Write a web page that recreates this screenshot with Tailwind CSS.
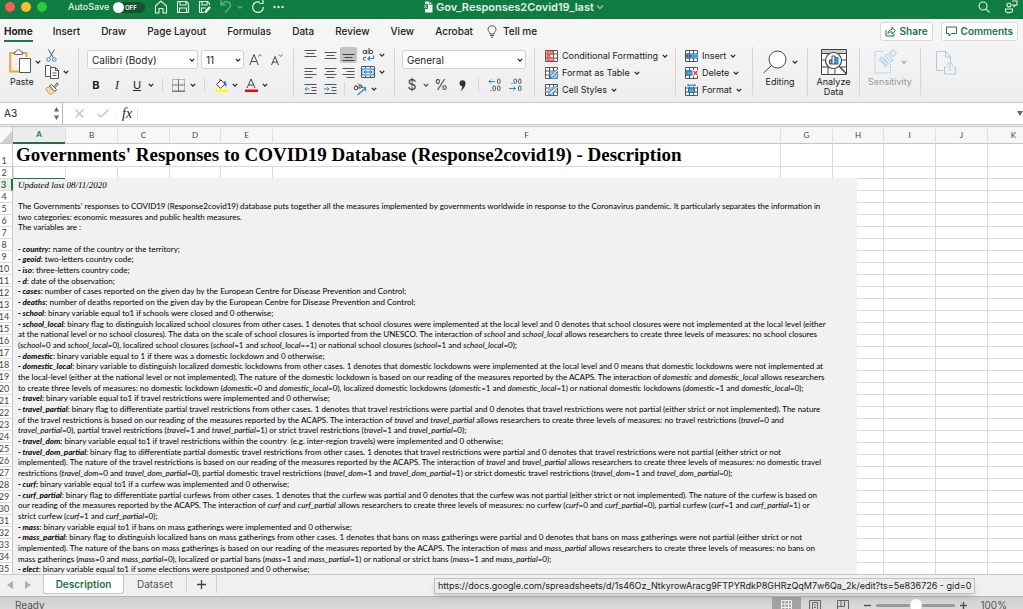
<!DOCTYPE html>
<html lang="en">
<head>
    <meta charset="UTF-8">
    <meta name="viewport" content="width=device-width, initial-scale=1.0">
    <title>Gov_Responses2Covid19_last</title>
    <script src="https://cdn.jsdelivr.net/npm/@tailwindcss/browser@4"></script>
</head>
<body class="h-screen overflow-hidden flex flex-col bg-[#f2f2f2] font-['Inter','Liberation_Sans',sans-serif] text-[#222]">
    <svg class="hidden">
        <symbol id="chev" viewBox="0 0 6 6"><path d="M.8 1.8 3 4.2 5.2 1.8" fill="none" stroke="currentColor" stroke-width="1.2"/></symbol>
        <symbol id="cells" viewBox="0 0 13 12"><path d="M.5.5h12v11H.5zM.5 4h12M.5 8h12M4.5.5v11M8.5.5v11" fill="#fff" stroke="#555"/></symbol>
    </svg>

    <!-- title bar -->
    <header class="h-[19px] shrink-0 bg-[#107c41] text-white grid grid-cols-[423px_1fr_auto] pb-[6px] items-center">
        <div class="flex items-center pl-[5px]">
            <div class="flex gap-[6px]">
                <span class="size-[10px] rounded-full bg-[#fc5b57]"></span>
                <span class="size-[10px] rounded-full bg-[#fdbc2e]"></span>
                <span class="size-[10px] rounded-full bg-[#28c840]"></span>
            </div>
            <label for="autosave" class="ml-[21px] w-[45px] text-[9px] leading-3 font-medium text-[#e3f1e9]">AutoSave</label>
            <button id="autosave" class="flex items-center w-8 h-[11px] rounded-full bg-[#155231] text-[6px] font-semibold"><span class="size-[11px] rounded-full bg-white mr-[1px]"></span>OFF</button>
            <div class="flex items-center gap-2 ml-[9px]">
                <button aria-label="Home"><svg width="14" height="14" viewBox="0 0 14 14" fill="none" stroke="#e3f1e9" stroke-width="1.1"><path d="M1.5 6 7 1l5.500 5v7H9V8.500H5V13H1.500z"/></svg></button>
                <button aria-label="Save"><svg width="14" height="14" viewBox="0 0 14 14" fill="none" stroke="#e3f1e9" stroke-width="1.100"><path d="M1.500 1.500h9l2 2v9h-11zM4 1.500V5h6V1.500M3.500 12.500V8h7v4.500"/></svg></button>
                <button aria-label="Save as"><svg width="14" height="14" viewBox="0 0 14 14" fill="none" stroke="#e3f1e9" stroke-width="1.100"><path d="M6 12.500H1.500v-11h8l2 2V5M4 1.500V5h5V1.500M3.500 12.500V8H8"/><path d="m7 12.500 5-5.500" stroke="#fff" stroke-width="2.500"/></svg></button>
                <button aria-label="Undo" class="flex items-center gap-[5px] text-[#6db48c]"><svg width="12" height="14" viewBox="0 0 12 14" fill="none" stroke="currentColor" stroke-width="1.200"><path d="M1 0v5h5M1.500 4.500C5 0 11 1.500 10.500 5.500 10 8 7.500 10 5 12.500"/></svg><svg width="6" height="6"><use href="#chev"/></svg></button>
                <button aria-label="Redo"><svg width="14" height="14" viewBox="0 0 14 14" fill="none" stroke="#e3f1e9" stroke-width="1.200"><path d="M9 2.200A5.300 5.300 0 1 0 12.300 7M12 0v3.500H8.500"/></svg></button>
                <button aria-label="More"><svg width="12" height="4" viewBox="0 0 12 4" fill="#e3f1e9"><circle cx="1.500" cy="2" r="1.200"/><circle cx="5.500" cy="2" r="1.200"/><circle cx="9.500" cy="2" r="1.200"/></svg></button>
            </div>
        </div>
        <div class="flex items-center">
            <svg width="10" height="12" viewBox="0 0 10 12"><path d="M2 .5h4.500L9.500 3.500v8H2z" fill="#f4faf6"/><path d="M6.500.5v3h3" stroke="#107c41" fill="none" stroke-width=".7"/><path d="M0 3h5v5H0z" fill="#107c41"/><path d="m1 3.800 3 3.400m0-3.400L1 7.200M6 6h2.500M6 8h2.500" stroke="#c9e4d5"/></svg>
            <h1 class="ml-[3px] text-[11px] leading-3 font-semibold text-[#e3f1e9]">Gov_Responses2Covid19_last</h1>
            <svg width="8" height="8" class="ml-[2px] text-[#7dbd99]"><use href="#chev"/></svg>
        </div>
        <div class="flex items-center gap-[14px] pr-[5px]">
            <button aria-label="Search"><svg width="12" height="12" viewBox="0 0 12 12" fill="none" stroke="#e3f1e9" stroke-width="1.100"><circle cx="5" cy="5" r="4"/><path d="m8 8 3.500 3.500"/></svg></button>
            <button aria-label="Presence"><svg width="14" height="14" viewBox="0 0 14 14" fill="none" stroke="#e3f1e9" stroke-width="1.100"><circle cx="5" cy="5" r="2"/><path d="M1.500 9h7v1.500c0 3-7 3-7 0zM8 1h5v4h-1.500L10 6.500V5H8"/></svg></button>
        </div>
    </header>

    <!-- ribbon tabs -->
    <nav class="h-6 shrink-0 flex items-center pl-1 pr-[5px] text-[10px] font-medium bg-[#f5f5f5]">
        <a href="#" class="h-6 pt-[3px] leading-[18px] font-bold"><span class="block border-b-2 border-[#107c41]">Home</span></a>
        <div class="flex gap-[21px] ml-5">
            <a href="#">Insert</a>
            <a href="#">Draw</a>
            <a href="#">Page Layout</a>
            <a href="#">Formulas</a>
            <a href="#">Data</a>
            <a href="#">Review</a>
            <a href="#">View</a>
            <a href="#">Acrobat</a>
        </div>
        <a href="#" class="flex items-center gap-[6px] ml-[14px]"><svg width="10" height="13" viewBox="0 0 10 13" fill="none" stroke="#555"><path d="M3 9C3 7 1 6.500 1 4.500 1 -.500 9 -.500 9 4.500 9 6.500 7 7 7 9zM3 10.500h4M4 12.300h2"/></svg>Tell me</a>
        <div class="ml-auto flex gap-2 font-semibold text-[#217346]">
            <button class="flex items-center gap-1 h-[19px] px-1 bg-white border border-[#d9d9d9] rounded-[3px]"><svg width="11" height="11" viewBox="0 0 11 11" fill="none" stroke="#217346"><path d="M1 4v6h8V7.500M3 7.500C3 4.500 5 3.500 7 3.500V1.200l3.300 3.500L7 8V5.800C5 5.800 4 6 3 7.500z"/></svg>Share</button>
            <button class="flex items-center gap-1 h-[19px] px-1 bg-white border border-[#d9d9d9] rounded-[3px]"><svg width="11" height="11" viewBox="0 0 11 11" fill="none" stroke="#217346"><path d="M.5 1h10v6.500H5.500L3 10V7.500H.5z"/></svg>Comments</button>
        </div>
    </nav>

    <!-- ribbon -->
    <section class="h-[59px] shrink-0 flex pt-1 text-[9px] leading-[10px] bg-gradient-to-b from-[#f5f5f5] to-[#ededed] [&>div]:h-[50px] [&>div]:shrink-0 [&>div]:border-r [&>div]:border-[#d6d6d6]">
        <div class="w-[79px] flex gap-[5px] pl-[9px]">
            <button class="flex flex-col items-center w-[31px]">
                <span class="flex items-center gap-[3px] h-[29px]">
                    <svg width="23" height="25" viewBox="0 0 23 25" fill="none"><path d="M5 4H1.200v18.500H10M14 4h3.500v4" stroke="#efa53c" stroke-width="2"/><path d="M5.500 5.500V3H7c0-3 5-3 5 0h1.500v2.500z" fill="#fff" stroke="#666"/><path d="M10.500 9.500h11v14h-11z" fill="#fff" stroke="#555"/></svg>
                    <svg width="6" height="6"><use href="#chev"/></svg>
                </span>
                <span class="self-start ml-[1px] mt-[1px]">Paste</span>
            </button>
            <div class="flex flex-col gap-[3px] pt-[2px]">
                <button aria-label="Cut" class="ml-[1px]"><svg width="11" height="13" viewBox="0 0 11 13" fill="none"><path d="m2.500.5 4.700 8M8.500.5 3.800 8.500" stroke="#555"/><circle cx="2.500" cy="10.500" r="1.800" stroke="#2b88d8"/><circle cx="8.300" cy="10.500" r="1.800" stroke="#2b88d8"/></svg></button>
                <button aria-label="Copy" class="flex items-center gap-1"><svg width="14" height="14" viewBox="0 0 14 14" fill="#fff" stroke="#555"><path d="M5 11.500H.5V.5h4l2 1.500"/><path d="M5.500 2.500h5l3 3v8h-8zM10.500 2.500v3h3M7.500 8h4M7.500 10.500h4"/></svg><svg width="6" height="6"><use href="#chev"/></svg></button>
                <button aria-label="Format painter"><svg width="14" height="13" viewBox="0 0 14 13"><path d="M1 6.500 4 4.500l5 5-2.500 3C4 12 1.500 9.500 1 6.500z" fill="#fbd9a8" stroke="#e8912d"/><path d="m4.500 4 2-1.500 5 5L10 9.500zM9 4.500 12 1l1.200 1L10 5.500z" fill="#fff" stroke="#555"/></svg></button>
            </div>
        </div>

        <div class="w-[215px] pl-2 pt-[3px]">
            <div class="flex items-center">
                <span class="relative"><select aria-label="Font" class="appearance-none w-[111px] h-[19px] pl-1 text-[10px] bg-white border border-[#d2d2d2] rounded-[3px]"><option>Calibri (Body)</option></select><svg width="6" height="6" class="absolute right-[3px] top-[7px]"><use href="#chev"/></svg></span>
                <span class="relative ml-[3px]"><select aria-label="Font size" class="appearance-none w-[43px] h-[19px] pl-1 text-[10px] bg-white border border-[#d2d2d2] rounded-[3px]"><option>11</option></select><svg width="6" height="6" class="absolute right-[3px] top-[7px]"><use href="#chev"/></svg></span>
                <button aria-label="Grow font" class="ml-[5px]"><svg width="13" height="13" viewBox="0 0 13 13" fill="none" stroke="#444"><path d="M.7 12 5 1.500 9.300 12M2.200 8.500h5.600"/><path d="m9.500 3.500 1.700-2L13 3.500" stroke="#2b88d8"/></svg></button>
                <button aria-label="Shrink font" class="ml-2"><svg width="13" height="13" viewBox="0 0 13 13" fill="none" stroke="#444"><path d="M1.500 12 5 3.500 8.500 12M2.700 9h4.600"/><path d="m9 1.500 1.700 2 1.800-2" stroke="#2b88d8"/></svg></button>
            </div>
            <div class="flex items-center h-5 mt-[6px] pl-1 text-[11px]">
                <button class="w-[10px] font-bold">B</button>
                <button class="w-[10px] ml-[11px] italic font-['Liberation_Serif',serif] text-[12px]">I</button>
                <button class="w-[10px] ml-[10px] underline">U</button>
                <svg width="6" height="6" class="ml-[6px]"><use href="#chev"/></svg>
                <span class="w-px h-[14px] ml-2 bg-[#d6d6d6]"></span>
                <button aria-label="Borders" class="ml-[9px]"><svg width="13" height="13" viewBox="0 0 13 13" fill="none" stroke="#777"><path d="M.5.5h12v11H.5z" stroke-dasharray="1 1"/><path d="M0 6h13M6.500 0v12M0 12.500h13"/></svg></button>
                <svg width="6" height="6" class="ml-[5px]"><use href="#chev"/></svg>
                <span class="w-px h-[14px] ml-2 bg-[#d6d6d6]"></span>
                <button aria-label="Fill color" class="ml-[9px]"><svg width="14" height="14" viewBox="0 0 14 14"><path d="M2.500 6.500 7 2l4 4-4.500 4.300zM6 3V.8" fill="#fff" stroke="#444"/><path d="M10 3.500c2 .5 2 2.500 1.800 5" fill="none" stroke="#2b88d8" stroke-width="1.500"/><path d="M1 11.500h13V14H1z" fill="#ffff00"/></svg></button>
                <svg width="6" height="6" class="ml-[4px]"><use href="#chev"/></svg>
                <button aria-label="Font color" class="ml-[6px]"><svg width="14" height="14" viewBox="0 0 14 14" fill="none" stroke="#444"><path d="m3 10 4-9 4 9M4.500 7h5"/><path d="M1 11.500h13V14H1z" fill="#ff0000" stroke="none"/></svg></button>
                <svg width="6" height="6" class="ml-[4px]"><use href="#chev"/></svg>
            </div>
        </div>

        <div class="w-[101px] pl-[7px] flex flex-col">
            <div class="flex items-center h-4">
                <button aria-label="Align top" class="w-[19px] pl-[3px]"><svg width="13" height="13" viewBox="0 0 13 13" stroke="#555"><path d="M.5 1.500h12M2.500 4.500h8M.5 7.500h12"/></svg></button>
                <button aria-label="Align middle" class="w-[20px] pl-[4px]"><svg width="13" height="13" viewBox="0 0 13 13" stroke="#555"><path d="M.5 3.500h12M2.500 6.500h8M.5 9.500h12"/></svg></button>
                <button aria-label="Align bottom" class="w-[17px] h-4 pl-[2px] rounded-[2px] bg-[#c4c4c4]"><svg width="13" height="13" viewBox="0 0 13 13" stroke="#444"><path d="M.5 5.500h12M2.500 8.500h8M.5 11.500h12"/></svg></button>
                <button aria-label="Wrap text" class="ml-[5px] mr-[4px]"><svg width="13" height="14" viewBox="0 0 13 14" fill="none" stroke="#444"><circle cx="2.700" cy="4" r="1.700"/><path d="M4.800 2v4M7 0v6M4 9.500c-3-1.500-4 3-.5 3"/><circle cx="9" cy="4" r="1.700"/><path d="M11.500 7.500v3H6m2-2-2 2 2 2" stroke="#2b88d8" stroke-width="1.200"/></svg></button>
                <svg width="6" height="6"><use href="#chev"/></svg>
            </div>
            <div class="flex items-center h-[18px]">
                <button aria-label="Align left" class="w-[19px] pl-[3px]"><svg width="13" height="13" viewBox="0 0 13 13" stroke="#555"><path d="M.5 2.500h12M.5 5.500h8M.5 8.500h12M.5 11.500h8"/></svg></button>
                <button aria-label="Align center" class="w-[20px] pl-[4px]"><svg width="13" height="13" viewBox="0 0 13 13" stroke="#555"><path d="M.5 2.500h12M2.500 5.500h8M.5 8.500h12M2.500 11.500h8"/></svg></button>
                <button aria-label="Align right" class="w-[17px] pl-[2px]"><svg width="13" height="13" viewBox="0 0 13 13" stroke="#555"><path d="M.5 2.500h12M4.500 5.500h8M.5 8.500h12M4.500 11.500h8"/></svg></button>
                <button aria-label="Merge" class="ml-[4px] mr-[4px]"><svg width="14" height="12" viewBox="0 0 14 12" fill="none"><path d="M.5.5h13v11H.5zM4.500.5v2M9.500.5v2M4.500 9.500v2M9.500 9.500v2" stroke="#555"/><path d="M1 3h12v6H1z" fill="#cfe6f8" stroke="#2b88d8"/><path d="M3 6h8M4.500 4.500 3 6l1.500 1.500M9.500 4.500 11 6 9.500 7.500" stroke="#1a70c0"/></svg></button>
                <svg width="6" height="6"><use href="#chev"/></svg>
            </div>
            <div class="flex items-center h-4">
                <button aria-label="Decrease indent" class="w-[19px] pl-[3px]"><svg width="13" height="13" viewBox="0 0 13 13" stroke="#555" fill="none"><path d="M.5 1.500h12M7.500 4.500h5M7.500 7.500h5M.5 10.500h12"/><path d="M5.500 6H1m1.800-1.800L1 6l1.800 1.800" stroke="#2b88d8"/></svg></button>
                <button aria-label="Increase indent" class="w-[20px] pl-[4px]"><svg width="13" height="13" viewBox="0 0 13 13" stroke="#555" fill="none"><path d="M.5 1.500h12M7.500 4.500h5M7.500 7.500h5M.5 10.500h12"/><path d="M0 6h5M3.200 4.200 5 6 3.200 7.800" stroke="#2b88d8"/></svg></button>
                <span class="w-px h-[14px] ml-[4px] bg-[#d6d6d6]"></span>
                <button aria-label="Orientation" class="ml-[8px] mr-[4px]"><svg width="14" height="13" viewBox="0 0 14 13" fill="none" stroke="#444"><circle cx="3" cy="5" r="1.800"/><path d="m2.500 2 4 4M5 .500l4 4"/><circle cx="7.500" cy="3.500" r="1.500"/><path d="m4.500 12 8-7M9 4.500h3.500V8" stroke="#2b88d8" stroke-width="1.200"/></svg></button>
                <svg width="6" height="6"><use href="#chev"/></svg>
            </div>
        </div>

        <div class="w-[140px] pl-[7px] pt-[3px]">
            <span class="relative block w-[124px]"><select aria-label="Number format" class="appearance-none w-full h-[19px] pl-1 text-[10px] bg-white border border-[#d2d2d2] rounded-[3px]"><option>General</option></select><svg width="6" height="6" class="absolute right-[3px] top-[7px]"><use href="#chev"/></svg></span>
            <div class="flex items-center h-5 mt-[6px] pl-[5px] text-[14px] text-[#444]">
                <button class="w-[10px]">$</button>
                <svg width="6" height="6" class="ml-[6px]"><use href="#chev"/></svg>
                <button class="w-[14px] ml-[5px]">%</button>
                <button aria-label="Comma style" class="ml-[11px]"><svg width="7" height="11" viewBox="0 0 7 11"><path d="M.5 3.300a3 3 0 0 1 6 0C6.500 7 4 10 1 11c1.500-1.500 2.300-3 2.300-4.800C1.500 6.200.5 5 .5 3.300z" fill="#333"/></svg></button>
                <span class="w-px h-[14px] ml-[12px] bg-[#d6d6d6]"></span>
                <button aria-label="Increase decimal" class="ml-[9px]"><svg width="13" height="14" viewBox="0 0 13 14" fill="none" stroke="#555"><rect x="9.500" y="1" width="2.500" height="4.500" rx="1.200"/><rect x="5" y="8" width="2.500" height="4.500" rx="1.200"/><rect x="9.500" y="8" width="2.500" height="4.500" rx="1.200"/><path d="M2.500 12.500h1"/><path d="M7 3.500H1m2-2-2 2 2 2" stroke="#2b88d8"/></svg></button>
                <button aria-label="Decrease decimal" class="ml-[8px]"><svg width="13" height="14" viewBox="0 0 13 14" fill="none" stroke="#555"><rect x="5" y="1" width="2.500" height="4.500" rx="1.200"/><rect x="9.500" y="1" width="2.500" height="4.500" rx="1.200"/><rect x="9.500" y="8" width="2.500" height="4.500" rx="1.200"/><path d="M2.500 5.500h1"/><path d="M0 10.500h6.500m-2-2 2 2-2 2" stroke="#2b88d8"/></svg></button>
            </div>
        </div>

        <div class="w-[141px] pl-[10px] [&>button]:flex [&>button]:items-center [&>button]:h-[17px] [&>button]:gap-1">
            <button><svg width="13" height="12" viewBox="0 0 13 12"><use href="#cells"/><path d="M2 1h6v3H2zM2 5h3v3H2zM2 8h7v3H2z" fill="#f28b82" stroke="#e0443c" stroke-width=".8"/></svg>Conditional Formatting<svg width="6" height="6"><use href="#chev"/></svg></button>
            <button><svg width="13" height="12" viewBox="0 0 13 12"><use href="#cells"/><path d="M5 4.500h7.500v7H5z" fill="#8cc2ee"/><path d="m5 11.500 1-3 6.500-6.500 1 1.500L7.500 10z" fill="#fff" stroke="#1a70c0" stroke-width=".9"/></svg>Format as Table<svg width="6" height="6"><use href="#chev"/></svg></button>
            <button><svg width="13" height="12" viewBox="0 0 13 12"><use href="#cells"/><path d="M3 3h8v6H3z" fill="#8cc2ee"/><path d="m3 11.500 1.500-3.500 7.500-6 1 1.500L6.500 10z" fill="#fff" stroke="#1a70c0" stroke-width=".9"/></svg>Cell Styles<svg width="6" height="6"><use href="#chev"/></svg></button>
        </div>

        <div class="w-[77px] pl-[9px] [&>button]:flex [&>button]:items-center [&>button]:h-[17px] [&>button]:gap-1">
            <button><svg width="13" height="12" viewBox="0 0 13 12"><use href="#cells"/><path d="M5 4h8v4H5z" fill="#4c9fe0"/><path d="M7 6H1m2.500-2.500L1 6l2.500 2.500" fill="none" stroke="#1a70c0" stroke-width="1.300"/></svg>Insert<svg width="6" height="6"><use href="#chev"/></svg></button>
            <button><svg width="13" height="12" viewBox="0 0 13 12"><use href="#cells"/><path d="M1 4h5l2 2-2 2H1z" fill="#4c9fe0" stroke="#1a70c0"/><path d="M7.500 3h5.500v6H7.500z" fill="#f4f4f4"/><path d="m8.500 4 4 4m0-4-4 4" stroke="#e0443c" stroke-width="1.200"/></svg>Delete<svg width="6" height="6"><use href="#chev"/></svg></button>
            <button><svg width="13" height="12" viewBox="0 0 13 12"><use href="#cells"/><path d="M3.500 4h6v4.500h-6z" fill="#4c9fe0" stroke="#1a70c0"/><path d="M0 0h13v2.500H0z" fill="#f2f2f2"/><path d="M3 1.200h7M3 0v2.500M10 0v2.500" stroke="#1a70c0"/></svg>Format<svg width="6" height="6"><use href="#chev"/></svg></button>
        </div>

        <div class="w-[55px] flex">
            <button class="flex flex-col items-center w-full">
                <span class="flex items-center gap-[5px] h-[29px]"><svg width="24" height="24" viewBox="0 0 24 24" fill="none" stroke="#444"><circle cx="14.500" cy="9.500" r="8.500" fill="#fff"/><path d="M8.500 15.500.500 23"/></svg><svg width="6" height="6"><use href="#chev"/></svg></span>
                <span class="mt-[1px]">Editing</span>
            </button>
        </div>

        <div class="w-[52px] flex">
            <button class="flex flex-col items-center w-full">
                <span class="flex items-center h-[29px]"><svg width="26" height="26" viewBox="0 0 26 26" fill="none" stroke="#444"><path d="M.500.500h25v25H.500z" fill="#fff"/><path d="M1 1h24v3.500H1z" fill="#ccc" stroke="none"/><path d="M.500 4.500h25M.500 11h6M.500 18h8M19 11h6.500M20 18h5.500M7 18v7M14 20v5"/><circle cx="12.500" cy="11.500" r="8" fill="#fff" stroke-width="1.200"/><path d="m18 17 7.500 8" stroke-width="1.500"/><path d="M8.500 11h2.500v4H8.500z" fill="#bbb"/><path d="M11 7h3v8h-3z" fill="#fff"/><path d="M14 8.500h3V15h-3z" fill="#4c9fe0" stroke="#1a70c0"/></svg></span>
                <span class="mt-[1px]">Analyze<br>Data</span>
            </button>
        </div>

        <div class="w-[61px] flex">
            <button disabled class="flex flex-col items-center w-full text-[#999]">
                <span class="flex items-center gap-1 h-[29px]"><svg width="23" height="25" viewBox="0 0 23 25" fill="none" stroke="#a9cbea"><path d="M10 2.500H1v21.500h15.500V15" stroke-dasharray="2 1"/><path d="m13 5 6 6-2 2-6-6zM15 4l4-3.500L22.500 4 19 8z" fill="#e4eef8"/><path d="m5 10.500 3-3 7 7-3 3z" fill="#e4eef8"/><path d="m6.500 10.500 5.500 5.500M8.500 9.500l5 5"/></svg><svg width="6" height="6"><use href="#chev"/></svg></span>
                <span class="mt-[1px]">Sensitivity</span>
            </button>
        </div>

        <button disabled aria-label="Share PDF" class="ml-[15px] self-start mt-1"><svg width="20" height="24" viewBox="0 0 20 24" fill="none" stroke="#a9cbea"><path d="M7 19.500H.500V.500h9L14.500 6v4M9.500.500V6h5M10.500 16H8.500v7h11v-7h-2M14 20v-9m-3 3 3-3 3 3"/></svg></button>
    </section>

    <!-- formula bar -->
    <div class="h-[23px] shrink-0 flex items-center bg-white border-y border-[#c6c6c6]">
        <input aria-label="Name box" value="A3" class="w-[50px] pl-1 text-[10px]">
        <div class="flex items-center justify-center w-[13px] h-full border-r border-[#b5b5b5]"><svg width="5" height="13" viewBox="0 0 5 13" fill="#666"><path d="M0 4.500 2.500 0 5 4.500zM0 8.500h5L2.500 13z"/></svg></div>
        <button disabled aria-label="Cancel" class="ml-3"><svg width="9" height="9" viewBox="0 0 9 9" stroke="#c4c4c4" stroke-width="1.500"><path d="m.5.5 8 8m0-8-8 8"/></svg></button>
        <button disabled aria-label="Enter" class="ml-[13px]"><svg width="12" height="9" viewBox="0 0 12 9" fill="none" stroke="#c4c4c4" stroke-width="1.500"><path d="M.5 5 4 8 11.500.5"/></svg></button>
        <label for="formula" class="ml-[13px] text-[14px] leading-4 italic font-['Liberation_Serif',serif]">fx</label>
        <input id="formula" class="flex-1 ml-[5px] pl-1 h-3 border-l border-[#e2e2e2] text-[10px]">
        <svg width="6" height="5" viewBox="0 0 6 5" fill="#666"><path d="M0 0h6L3 5z"/></svg>
    </div>

    <!-- sheet -->
    <main class="relative flex-1 min-h-0 overflow-hidden bg-white mt-[1px] border-t border-[#c6c6c6] font-['Lato','Liberation_Sans',sans-serif]">
        <table class="table-fixed w-full border-separate border-spacing-0 text-[9px] leading-[11px] text-[#444]">
            <colgroup>
                <col class="w-[13px]"><col class="w-[52px]"><col class="w-[52px]"><col class="w-[52px]"><col class="w-[51px]"><col class="w-[52px]"><col class="w-[508px]"><col class="w-[52px]"><col class="w-[51px]"><col class="w-[52px]"><col class="w-[52px]"><col class="w-[52px]">
            </colgroup>
            <thead>
                <tr id="letters" class="h-[17px] bg-[#f7f7f7] text-[8px]"></tr>
            </thead>
            <tbody id="rows"></tbody>
        </table>
        <div class="absolute left-[13px] top-[51px] bottom-0 w-[844px] pl-[5px] bg-[#f1f1f1] text-[8px] leading-[11px] text-black whitespace-nowrap">
            <p class="h-[23px] pt-[2px] text-[9px] font-['Liberation_Serif',serif] italic">Updated last 08/11/2020</p>
            <div id="notes" class="grid auto-rows-fr h-[374px] [&_b]:italic"></div>
        </div>
        <span class="absolute left-[13px] top-[51px] w-[52px] h-px bg-[#217346]"></span>
    </main>

    <!-- sheet tabs -->
    <nav class="relative h-[22px] shrink-0 flex items-start bg-[#f0f0f0] border-t border-[#c6c6c6] text-[10px] leading-[18px]">
        <button aria-label="Previous sheet" class="ml-[7px] mt-[6px]"><svg width="6" height="8" viewBox="0 0 6 8" fill="#b0b0b0"><path d="M6 0v8L0 4z"/></svg></button>
        <button aria-label="Next sheet" class="ml-3 mr-3 mt-[6px]"><svg width="6" height="8" viewBox="0 0 6 8" fill="#b0b0b0"><path d="M0 0v8l6-4z"/></svg></button>
        <a href="#" class="w-[81px] h-[19px] text-center bg-white border border-t-0 border-[#c6c6c6] rounded-b-[3px] font-semibold text-[#217346]">Description</a>
        <a href="#" class="w-[63px] text-center border-r border-[#d0d0d0] text-[#555]">Dataset</a>
        <button aria-label="Add sheet" class="w-[30px] h-[18px] flex items-center justify-center border-r border-[#d0d0d0]"><svg width="9" height="9" viewBox="0 0 9 9" stroke="#444" stroke-width="1.300"><path d="M4.500 0v9M0 4.500h9"/></svg></button>
        <span class="absolute left-[434px] top-[3px] h-4 px-[3px] text-[9px] leading-[14px] whitespace-nowrap bg-[#ececec] border border-[#c2c2c2] shadow-md text-[#222]">https://docs.google.com/spreadsheets/d/1s46Oz_NtkyrowAracg9FTPYRdkP8GHRzQqM7w6Qa_2k/edit?ts=5e836726 - gid=0</span>
    </nav>

    <!-- status bar -->
    <footer class="h-[13px] shrink-0 bg-gradient-to-b from-[#cfcfcf] to-[#dadada] border-t border-[#b5b5b5] text-[10px] text-[#555] overflow-hidden">
        <div class="flex items-center h-4 pl-[15px] pr-4">
            <span class="mr-auto">Ready</span>
            <button aria-label="Normal view" class="flex justify-center items-center w-[29px] h-4 bg-[#a3a3a3]"><svg width="11" height="11" viewBox="0 0 11 11" fill="none" stroke="#f2f2f2"><path d="M.5.5h10v10H.5zM.5 4h10M.5 7.500h10M4 .5v10M7.500.5v10"/></svg></button>
            <button aria-label="Page layout view" class="ml-2"><svg width="12" height="11" viewBox="0 0 12 11" fill="none" stroke="#666"><path d="M.5.5h11v10H.5zM3.500 2.500h5v8h-5zM5 5h2M5 7.500h2"/></svg></button>
            <button aria-label="Page break view" class="ml-4"><svg width="12" height="11" viewBox="0 0 12 11" fill="none" stroke="#666"><path d="M.5.5h11v10H.5zM.500 6.500h7v-6M4 .5v6"/></svg></button>
            <button aria-label="Zoom out" class="ml-[15px]"><svg width="7" height="7" viewBox="0 0 7 7" stroke="#555" stroke-width="1.500"><path d="M0 3.500h7"/></svg></button>
            <input type="range" aria-label="Zoom" value="50" class="appearance-none w-[79px] h-[3px] mx-[5px] rounded bg-[#9a9a9a] [&::-webkit-slider-thumb]:appearance-none [&::-webkit-slider-thumb]:size-3 [&::-webkit-slider-thumb]:rounded-full [&::-webkit-slider-thumb]:bg-white">
            <button aria-label="Zoom in"><svg width="7" height="7" viewBox="0 0 7 7" stroke="#555" stroke-width="1.500"><path d="M0 3.500h7M3.500 0v7"/></svg></button>
            <span class="ml-[13px]">100%</span>
        </div>
    </footer>

    <script>
        const letters = ['A', 'B', 'C', 'D', 'E', 'F', 'G', 'H', 'I', 'J', 'K'];
        const corner = '<th class="border-r border-b border-[#c6c6c6] align-bottom"><svg class="ml-auto" width="11" height="12" viewBox="0 0 11 12" fill="#d0d0d0"><path d="M11 0v12H0z"/></svg></th>';

        document.getElementById('letters').innerHTML = corner + letters.map(letter => letter === 'A'
            ? '<th class="p-0 font-bold bg-[#ececec] text-[#217346] border-b-2 border-[#217346]">A</th>'
            : `<th class="p-0 font-normal border-l border-b border-[#c6c6c6] border-l-[#e0e0e0]">${letter}</th>`
        ).join('');

        const cell = '<td class="p-0 border-l border-b border-[#d9d9d9]"></td>';

        function renderRow(n) {
            if (n === 1) {
                return `<tr class="h-[23px]">
                    <th class="p-0 pr-1 font-normal align-bottom border-r border-b border-[#c6c6c6]">1</th>
                    <td colspan="6" class="p-0 pl-[3px] border-b border-[#d9d9d9] font-['Liberation_Serif',serif] font-bold text-[19px] leading-[22px] text-black whitespace-nowrap">Governments' Responses to COVID19 Database (Response2covid19) - Description</td>
                    ${cell.repeat(5)}
                </tr>`;
            }
            const head = n === 3
                ? 'font-bold text-[#217346] border-r-2 border-r-[#217346] bg-[#ececec]'
                : 'font-normal border-r border-r-[#c6c6c6]';
            return `<tr class="h-3"><th class="p-0 border-b border-b-[#d9d9d9] ${head}"><span class="flex justify-center pr-1">${n}</span></th>${cell.repeat(11)}</tr>`;
        }

        document.getElementById('rows').innerHTML = Array.from({ length: 35 }, (_, i) => renderRow(i + 1)).join('');

        const notes = [
            "The Governments' responses to COVID19 (Response2covid19) database puts together all the measures implemented by governments worldwide in response to the Coronavirus pandemic. It particularly separates the information in",
            "two categories: economic measures and public health measures.",
            "The variables are :",
            "",
            "<b>- country:</b> name of the country or the territory;",
            "<b>- geoid</b>: two-letters country code;",
            "<b>- iso</b>: three-letters country code;",
            "<b>- d</b>: date of the observation;",
            "<b>- cases</b>: number of cases reported on the given day by the European Centre for Disease Prevention and Control;",
            "<b>- deaths</b>: number of deaths reported on the given day by the European Centre for Disease Prevention and Control;",
            "<b>- school</b>: binary variable equal to1 if schools were closed and 0 otherwise;",
            "<b>- school_local</b><i>:</i> binary flag to distinguish localized school closures from other cases. 1 denotes that school closures were implemented at the local level and 0 denotes that school closures were not implemented at the local level (either",
            "at the national level or no school closures). The data on the scale of school closures is imported from the UNESCO. The interaction of <i>school</i> and <i>school_local</i> allows researchers to create three levels of measures: no school closures",
            "(<i>school</i>=0 and <i>school_local</i>=0), localized school closures (<i>school</i>=1 and <i>school_local</i>==1) or national school closures (<i>school</i>=1 and <i>school_local</i>=0);",
            "<b>- domestic</b>: binary variable equal to 1 if there was a domestic lockdown and 0 otherwise;",
            "<b>- domestic_local</b>: binary variable to distinguish localized domestic lockdowns from other cases. 1 denotes that domestic lockdowns were implemented at the local level and 0 means that domestic lockdowns were not implemented at",
            "the local-level (either at the national level or not implemented). The nature of the domestic lockdown is based on our reading of the measures reported by the ACAPS. The interaction of <i>domestic</i> and <i>domestic_local</i> allows researchers",
            "to create three levels of measures: no domestic lockdown (<i>domestic</i>=0 and <i>domestic_local</i>=0), localized domestic lockdowns (<i>domestic</i>=1 and <i>domestic_local</i>=1) or national domestic lockdowns (<i>domestic</i>=1 and <i>domestic_local</i>=0);",
            "<b>- travel:</b> binary variable equal to1 if travel restrictions were implemented and 0 otherwise;",
            "<b>- travel_partial</b>: binary flag to differentiate partial travel restrictions from other cases. 1 denotes that travel restrictions were partial and 0 denotes that travel restrictions were not partial (either strict or not implemented). The nature",
            "of the travel restrictions is based on our reading of the measures reported by the ACAPS. The interaction of <i>travel</i> and <i>travel_partial</i> allows researchers to create three levels of measures: no travel restrictions (<i>travel</i>=0 and",
            "<i>travel_partial</i>=0), partial travel restrictions (<i>travel</i>=1 and <i>travel_partial</i>=1) or strict travel restrictions (<i>travel</i>=1 and <i>travel_partial</i>=0);",
            "<b>- travel_dom:</b> binary variable equal to1 if travel restrictions within the country&nbsp; (e.g. inter-region travels) were implemented and 0 otherwise;",
            "<b>- travel_dom_partial</b>: binary flag to differentiate partial domestic travel restrictions from other cases. 1 denotes that travel restrictions were partial and 0 denotes that travel restrictions were not partial (either strict or not",
            "implemented). The nature of the travel restrictions is based on our reading of the measures reported by the ACAPS. The interaction of <i>travel</i> and <i>travel_partial</i> allows researchers to create three levels of measures: no domestic travel",
            "restrictions (<i>travel_dom</i>=0 and <i>travel_dom_partial</i>=0), partial domestic travel restrictions (<i>travel_dom</i>=1 and <i>travel_dom_partial</i>=1) or strict domestic travel restrictions (<i>travel_dom</i>=1 and <i>travel_dom_partial</i>=0);",
            "<b>- curf:</b> binary variable equal to1 if a curfew was implemented and 0 otherwise;",
            "<b>- curf_partial</b>: binary flag to differentiate partial curfews from other cases. 1 denotes that the curfew was partial and 0 denotes that the curfew was not partial (either strict or not implemented). The nature of the curfew is based on",
            "our reading of the measures reported by the ACAPS. The interaction of <i>curf</i> and <i>curf_partial</i> allows researchers to create three levels of measures: no curfew (<i>curf</i>=0 and <i>curf_partial</i>=0), partial curfew (<i>curf</i>=1 and <i>curf_partial</i>=1) or",
            "strict curfew (<i>curf</i>=1 and <i>curf_partial</i>=0);",
            "<b>- mass</b>: binary variable equal to1 if bans on mass gatherings were implemented and 0 otherwise;",
            "<b>- mass_partial</b>: binary flag to distinguish localized bans on mass gatherings from other cases. 1 denotes that bans on mass gatherings were partial and 0 denotes that bans on mass gatherings were not partial (either strict or not",
            "implemented). The nature of the bans on mass gatherings is based on our reading of the measures reported by the ACAPS. The interaction of <i>mass</i> and <i>mass_partial</i> allows researchers to create three levels of measures: no bans on",
            "mass gatherings (<i>mass</i>=0 and <i>mass_partial</i>=0), localized or partial bans (<i>mass</i>=1 and <i>mass_partial</i>=1) or national or strict bans (<i>mass</i>=1 and <i>mass_partial</i>=0);",
            "<b>- elect</b>: binary variable equal to1 if some elections were postponed and 0 otherwise;"
        ];
        document.getElementById('notes').innerHTML = notes.map(line => `<p>${line}</p>`).join('');
    </script>
</body>
</html>
